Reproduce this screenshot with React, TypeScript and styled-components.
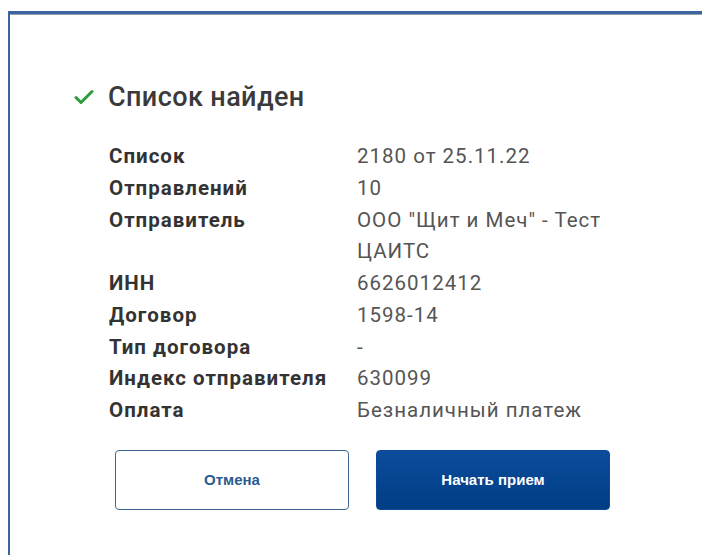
import React from "react";
import styled, { createGlobalStyle } from "styled-components";

interface DetailRow {
  label: string;
  value: string;
}

const rows: DetailRow[] = [
  { label: "Список", value: "2180 от 25.11.22" },
  { label: "Отправлений", value: "10" },
  { label: "Отправитель", value: "ООО \"Щит и Меч\" - Тест ЦАИТС" },
  { label: "ИНН", value: "6626012412" },
  { label: "Договор", value: "1598-14" },
  { label: "Тип договора", value: "-" },
  { label: "Индекс отправителя", value: "630099" },
  { label: "Оплата", value: "Безналичный платеж" },
];

/**
 * Green check shown next to the dialog title
 */
const CheckIcon = () => (
  <svg width="20" height="16" viewBox="0 0 20 16" fill="none">
    <path
      d="M2 8.5 L7 13.5 L18 2.5"
      stroke="#2f9a3a"
      strokeWidth="3"
      strokeLinecap="round"
      strokeLinejoin="round"
    />
  </svg>
);

/**
 * Found-list dialog with sender details and actions
 */
const App = () => {
  return (
    <>
      <GlobalStyle />
      <StyledWindow>
        {/* Start header */}
        <StyledHeader>
          <CheckIcon />
          <StyledTitle>Список найден</StyledTitle>
        </StyledHeader>
        {/* End header */}

        {/* Start details */}
        <StyledDetails>
          {rows.map((row) => (
            <React.Fragment key={row.label}>
              <StyledLabel>{row.label}</StyledLabel>
              <StyledValue>{row.value}</StyledValue>
            </React.Fragment>
          ))}
        </StyledDetails>
        {/* End details */}

        <StyledActions>
          <StyledButton>Отмена</StyledButton>
          <StyledButton primary>Начать прием</StyledButton>
        </StyledActions>
      </StyledWindow>
    </>
  );
};

export default App;

// ========= Start Styled Elements ==========
const GlobalStyle = createGlobalStyle`
  html, body {
    margin: 0;
    padding: 0;
    background: #ffffff;
    overflow: hidden;
  }
  body {
    font-family: Roboto, "Liberation Sans", sans-serif;
  }
`;

const StyledWindow = styled.div`
  margin: 11px 0 0 8px;
  height: calc(100vh - 11px);
  box-sizing: border-box;
  border-top: 3px solid #3a65a0;
  border-left: 2px solid #3a65a0;
  box-shadow: inset 0 1px 0 #9aa0a8;
  padding: 67px 0 0 64px;
  background: #ffffff;
`;

const StyledHeader = styled.div`
  display: flex;
  align-items: center;
  gap: 14px;
  height: 32px;
`;

const StyledTitle = styled.div`
  font-size: 27px;
  font-weight: 500;
  letter-spacing: 0.4px;
  color: #3a3a3a;
  line-height: 32px;
`;

const StyledDetails = styled.div`
  display: grid;
  grid-template-columns: 248px 260px;
  margin: 28px 0 0 35px;
  font-size: 20.5px;
  letter-spacing: 1px;
  line-height: 31.75px;
`;

const StyledLabel = styled.div`
  font-weight: 700;
  color: #333333;
  white-space: nowrap;
`;

const StyledValue = styled.div`
  color: #555555;
`;

const StyledActions = styled.div`
  display: flex;
  gap: 27px;
  margin: 23px 0 0 41px;
`;

const StyledButton = styled.button<{ primary?: boolean }>`
  width: 234px;
  height: 60px;
  box-sizing: border-box;
  border-radius: 4px;
  font-family: "Liberation Sans", Arial, sans-serif;
  font-size: 15px;
  font-weight: 700;
  cursor: pointer;
  border: 1px solid ${(p) => (p.primary ? "#0a4a98" : "#3d6591")};
  color: ${(p) => (p.primary ? "#ffffff" : "#2c5b90")};
  background: ${(p) =>
    p.primary ? "linear-gradient(#0b4c9c, #003d84)" : "#ffffff"};
`;
// ========= End Styled Elements ==========
